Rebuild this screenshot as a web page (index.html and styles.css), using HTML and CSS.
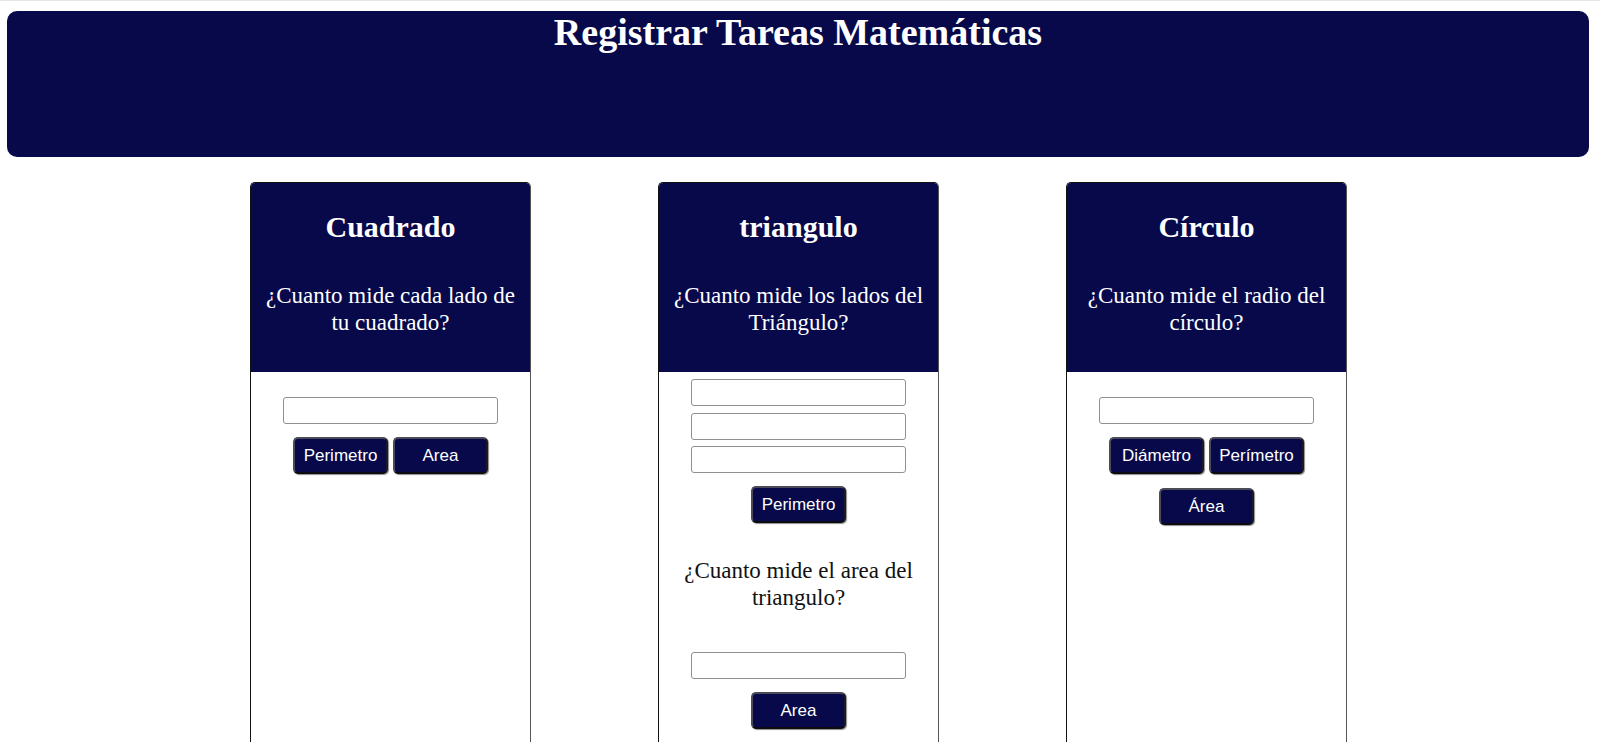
FILE: index.html
```html
<!DOCTYPE html>
<html lang="es">
<head>
<meta charset="utf-8">
<title>Registrar Tareas Matemáticas</title>
<link rel="stylesheet" href="styles.css">
</head>
<body>
<div class="page">
  <header class="banner">
    <h1 class="banner-title">Registrar Tareas Matemáticas</h1>
  </header>
  <main class="cards">
    <section class="card">
      <div class="card-head">
        <h2 class="card-title">Cuadrado</h2>
        <p class="card-question">¿Cuanto mide cada lado de tu cuadrado?</p>
      </div>
      <div class="card-body card-body-spaced">
        <input class="field" type="text">
        <div class="btn-row">
          <button class="btn">Perimetro</button>
          <button class="btn">Area</button>
        </div>
      </div>
    </section>
    <section class="card">
      <div class="card-head">
        <h2 class="card-title">triangulo</h2>
        <p class="card-question">¿Cuanto mide los lados del Triángulo?</p>
      </div>
      <div class="card-body card-body-tight">
        <div class="field-stack">
          <input class="field" type="text">
          <input class="field" type="text">
          <input class="field" type="text">
        </div>
        <div class="btn-row">
          <button class="btn">Perimetro</button>
        </div>
        <p class="body-question">¿Cuanto mide el area del triangulo?</p>
        <input class="field field-after-question" type="text">
        <div class="btn-row">
          <button class="btn">Area</button>
        </div>
      </div>
    </section>
    <section class="card">
      <div class="card-head">
        <h2 class="card-title">Círculo</h2>
        <p class="card-question">¿Cuanto mide el radio del círculo?</p>
      </div>
      <div class="card-body card-body-spaced">
        <input class="field" type="text">
        <div class="btn-row">
          <button class="btn">Diámetro</button>
          <button class="btn">Perímetro</button>
          <button class="btn">Área</button>
        </div>
      </div>
    </section>
  </main>
</div>
</body>
</html>
```

FILE: styles.css
```css
html, body {
  margin: 0;
  padding: 0;
  background: #ffffff;
}

body {
  font-family: "Liberation Serif", "Times New Roman", serif;
  border-top: 1px solid #e6e6e6;
  overflow: hidden;
}

.page {
  padding: 10px 11px 0 7px;
}

.banner {
  background: #07094b;
  border-radius: 10px;
  height: 146px;
  box-sizing: border-box;
  padding-top: 1px;
}

.banner-title {
  margin: 0;
  color: #ffffff;
  font-size: 38px;
  font-weight: bold;
  line-height: 40px;
  text-align: center;
}

.cards {
  display: flex;
  justify-content: center;
  align-items: flex-start;
  gap: 127px;
  margin-top: 25px;
  padding-left: 1px;
}

.card {
  width: 281px;
  min-height: 620px;
  box-sizing: border-box;
  border: 1px solid #111111;
  border-right-color: #555555;
  border-radius: 5px 5px 0 0;
  background: #ffffff;
  overflow: hidden;
}

.card-head {
  background: #07094b;
  color: #ffffff;
  text-align: center;
  padding: 26px 10px 36px;
}

.card-title {
  margin: 0;
  font-size: 30px;
  font-weight: bold;
  line-height: 35px;
}

.card-question {
  margin: 39px 0 0;
  font-size: 23px;
  line-height: 26.5px;
}

.card-body {
  display: flex;
  flex-direction: column;
  align-items: center;
}

.card-body-spaced {
  padding-top: 25px;
}

.card-body-tight {
  padding-top: 7px;
}

.field-stack {
  display: flex;
  flex-direction: column;
  gap: 6.5px;
}

.field {
  width: 215px;
  height: 27px;
  box-sizing: border-box;
  border: 1px solid #8f8f8f;
  border-radius: 3px;
  background: #ffffff;
  margin: 0;
  padding: 0 4px;
}

.btn-row {
  width: 215px;
  display: flex;
  flex-wrap: wrap;
  justify-content: center;
  gap: 14px 5px;
  margin-top: 13px;
}

.btn {
  width: 95px;
  height: 37px;
  box-sizing: border-box;
  background: #07094b;
  color: #ffffff;
  font-family: "Liberation Sans", Arial, sans-serif;
  font-size: 17px;
  border: 2px solid;
  border-color: #4b4b58 #1a1a22 #0c0c10 #4b4b58;
  border-radius: 5px;
  box-shadow: 1px 1px 1px rgba(0, 0, 0, 0.45);
  padding: 0;
  cursor: pointer;
}

.body-question {
  margin: 35px 0 0;
  width: 259px;
  text-align: center;
  color: #111111;
  font-size: 23px;
  line-height: 26.5px;
}

.field-after-question {
  margin-top: 41px;
}
```
